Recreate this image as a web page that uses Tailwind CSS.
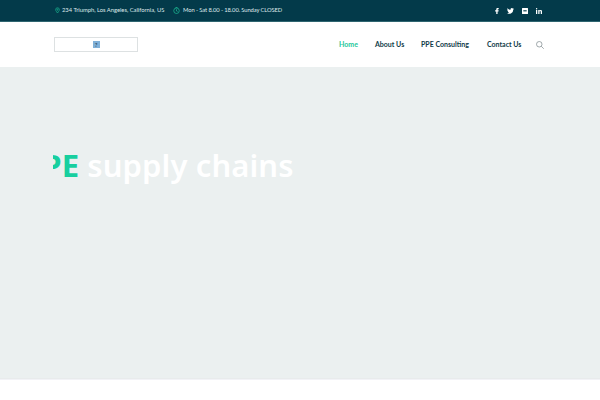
<!DOCTYPE html>
<html lang="en">
<head>
  <meta charset="UTF-8" />
  <title>PPE supply chains</title>
  <script src="https://cdn.jsdelivr.net/npm/@tailwindcss/browser@4"></script>
</head>
<body class="h-[400px] w-[600px] overflow-hidden bg-white font-['Lato',sans-serif]">

<!-- Top bar -->
<div class="flex h-[22px] items-center justify-between border-b border-[#2f6570] bg-[#033a4a] pl-[55px] pr-[58px] text-[5.8px] text-[#dfe9ea]">
  <div class="flex items-center">
    <svg class="mr-[2px] h-[7px] w-[5px]" viewBox="0 0 12 14" fill="none" stroke="#1fc79c" stroke-width="1.4"><path d="M6 13C3 9 1.500 7 1.500 5a4.500 4.500 0 0 1 9 0C10.500 7 9 9 6 13Z"/><circle cx="6" cy="5" r="1.500"/></svg>
    <span class="w-[103px] whitespace-nowrap">234 Triumph, Los Angeles, California, US</span>
    <svg class="ml-[8px] mr-[3px] h-[7px] w-[7px]" viewBox="0 0 14 14" fill="none" stroke="#1fc79c" stroke-width="1.3"><circle cx="7" cy="7.500" r="5.500"/><path d="M7 4.500V8l2 1M5 1h4"/></svg>
    <span class="whitespace-nowrap tracking-[-0.1px]">Mon - Sat 8.00 - 18.00. Sunday CLOSED</span>
  </div>
  <div class="flex items-center gap-[8px] text-white">
    <svg class="h-[6px] w-[4px]" viewBox="0 0 10 16" fill="currentColor"><path d="M3 16V9H0V6h3V4c0-3 1.500-4 4-4h2.500v3H8C6.800 3 6.500 3.500 6.500 4.500V6h3l-.5 3H6.500v7Z"/></svg>
    <svg class="h-[6px] w-[7px]" viewBox="0 0 24 20" fill="currentColor"><path d="M24 2.400c-.9.400-1.800.7-2.800.8 1-.6 1.800-1.500 2.200-2.700-1 .6-2 1-3.100 1.200A4.900 4.900 0 0 0 11.900 6.200C7.800 6 4.200 4 1.700.9c-1.300 2.200-.7 5.100 1.500 6.600-.8 0-1.600-.2-2.200-.6 0 2.400 1.700 4.400 3.900 4.900-.7.200-1.500.2-2.200.1.600 2 2.400 3.400 4.600 3.400A9.900 9.900 0 0 1 0 17.300 13.900 13.900 0 0 0 21.500 5c1-.7 1.800-1.600 2.500-2.600Z"/></svg>
    <svg class="h-[6px] w-[6px]" viewBox="0 0 12 12" fill="currentColor"><path fill-rule="evenodd" d="M1 0h10a1 1 0 0 1 1 1v10a1 1 0 0 1-1 1H1a1 1 0 0 1-1-1V1a1 1 0 0 1 1-1Zm2 4v3h2.500V4Zm3.500 0v3H9V4Z"/></svg>
    <svg class="h-[6px] w-[6px]" viewBox="0 0 12 12" fill="currentColor"><path d="M0 4h2.500v8H0ZM1.250 0a1.400 1.400 0 1 1 0 2.800 1.400 1.400 0 0 1 0-2.800ZM4.500 4H7v1.100C7.500 4.300 8.300 3.800 9.400 3.800c2 0 2.600 1.300 2.600 3.300V12H9.500V7.600c0-1-.3-1.700-1.200-1.700S7 6.600 7 7.600V12H4.500Z"/></svg>
  </div>
</div>

<!-- Header -->
<header class="flex h-[45px] items-center justify-between pl-[54px] pr-[56px]">
  <div class="flex h-[15px] w-[84px] items-center justify-center border border-[#dde1e2] bg-white">
    <div class="flex h-[7px] w-[7px] items-center justify-center bg-[#7fb0d8] text-[6px] leading-none text-[#234]">?</div>
  </div>
  <nav class="flex items-center text-[7px] font-bold text-[#0f3a48]">
    <a class="w-[18px] whitespace-nowrap text-[#1fc79c]" href="#">Home</a>
    <a class="ml-[18px] w-[29px] whitespace-nowrap" href="#">About Us</a>
    <a class="ml-[17px] w-[49px] whitespace-nowrap" href="#">PPE Consulting</a>
    <a class="ml-[17px] w-[34px] whitespace-nowrap" href="#">Contact Us</a>
    <svg class="ml-[15px] h-[8px] w-[8px]" viewBox="0 0 16 16" fill="none" stroke="#6f7c80" stroke-width="1.300"><circle cx="6.500" cy="6.500" r="5.500"/><path d="m10.500 10.500 5 5"/></svg>
  </nav>
</header>

<!-- Hero -->
<section class="flex h-[312px] flex-col border-b border-[#e8ebec] bg-[#ebf0f0] pl-[53px] pt-[78px]">
  <div class="w-[300px] overflow-hidden">
    <h1 class="-ml-[30px] whitespace-nowrap text-[31px] leading-[40px] font-semibold tracking-[0.1px] text-white font-['Noto_Sans',sans-serif]"><span class="font-bold text-[#17cf9f]">PPE</span> supply chains</h1>
  </div>
</section>

<div class="h-[21px] border-t border-[#f2f3f7] bg-white"></div>

</body>
</html>
